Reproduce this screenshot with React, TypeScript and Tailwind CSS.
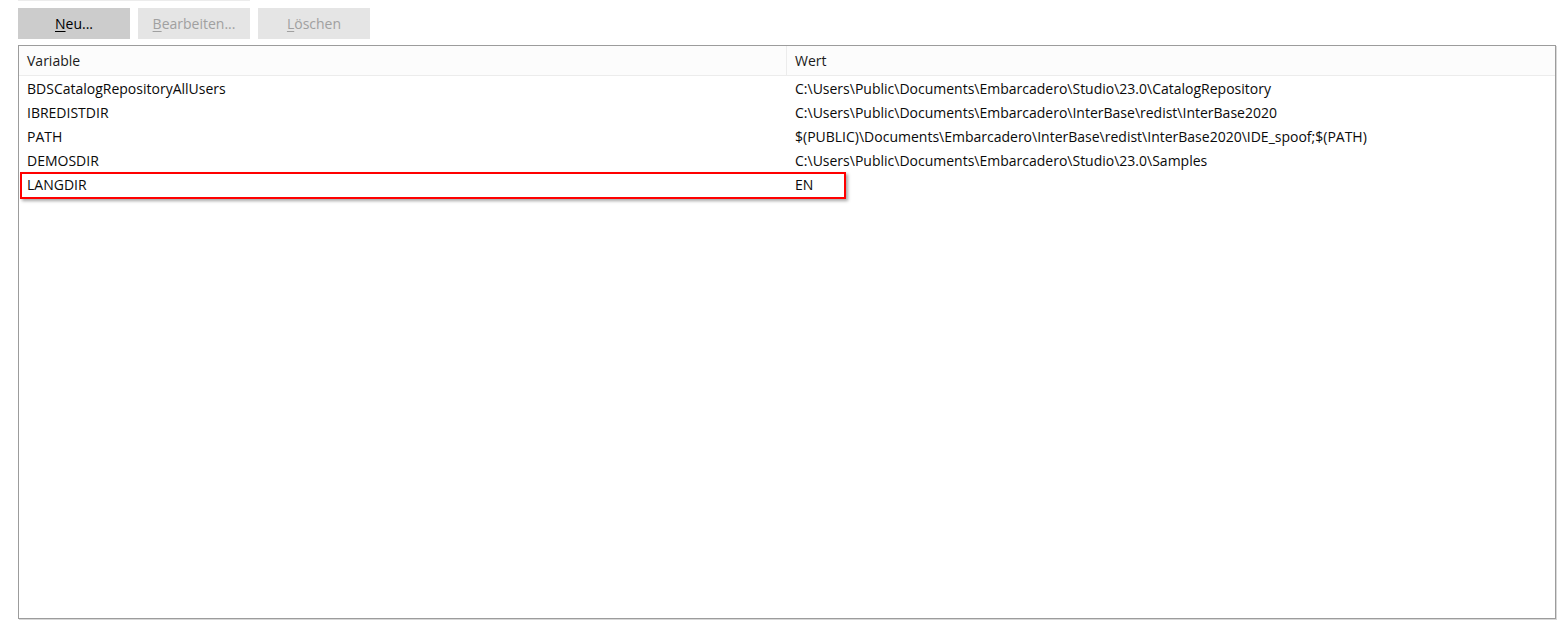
import React from "react";

const rows = [
  { name: "BDSCatalogRepositoryAllUsers", value: "C:\\Users\\Public\\Documents\\Embarcadero\\Studio\\23.0\\CatalogRepository" },
  { name: "IBREDISTDIR", value: "C:\\Users\\Public\\Documents\\Embarcadero\\InterBase\\redist\\InterBase2020" },
  { name: "PATH", value: "$(PUBLIC)\\Documents\\Embarcadero\\InterBase\\redist\\InterBase2020\\IDE_spoof;$(PATH)" },
  { name: "DEMOSDIR", value: "C:\\Users\\Public\\Documents\\Embarcadero\\Studio\\23.0\\Samples" },
  { name: "LANGDIR", value: "EN" },
];

function Btn({ label, mnemonic, active }: { label: string; mnemonic: string; active?: boolean }) {
  const rest = label.slice(mnemonic.length);
  return (
    <button
      className={`w-[112px] h-[31px] flex items-center justify-center text-[14px] ${
        active ? "bg-[#cccccc] text-black" : "bg-[#e5e5e5] text-[#a0a0a0]"
      }`}
    >
      <span className="underline underline-offset-2">{mnemonic}</span>
      {rest}
    </button>
  );
}

export default function App() {
  return (
    <div className="w-[1567px] h-[627px] bg-white overflow-hidden" style={{ fontFamily: '"Open Sans", "Noto Sans", sans-serif' }}>
      <div className="ml-[18px] w-[232px] h-[1px] bg-[#ececec]" />
      <div className="ml-[18px] mt-[7px] flex gap-[8px]">
        <Btn label="Neu..." mnemonic="N" active />
        <Btn label="Bearbeiten..." mnemonic="B" />
        <Btn label="Löschen" mnemonic="L" />
      </div>

      <div className="relative ml-[18px] mt-[6px] w-[1538px] h-[574px] border border-[#9c9c9c] shadow-[1px_1px_0_#d8d8d8]">
        <div className="flex h-[30px] bg-[#fcfcfc] border-b border-[#ececec] text-[14px] text-[#1a1a1a]">
          <div className="w-[768px] border-r border-[#ececec] pl-[8px] flex items-center">Variable</div>
          <div className="flex-1 pl-[8px] flex items-center">Wert</div>
        </div>
        <div className="text-[14px] text-[#0a0a0a]">
          {rows.map((r) => (
            <div key={r.name} className="flex h-[24px] items-center">
              <div className="w-[768px] pl-[8px] whitespace-nowrap">{r.name}</div>
              <div className="flex-1 pl-[8px] whitespace-nowrap">{r.value}</div>
            </div>
          ))}
        </div>

        <div className="absolute left-[1px] top-[126px] w-[826px] h-[27px] border-2 border-[#ff0000] shadow-[2px_2px_3px_rgba(0,0,0,0.35)]" />
      </div>
    </div>
  );
}
